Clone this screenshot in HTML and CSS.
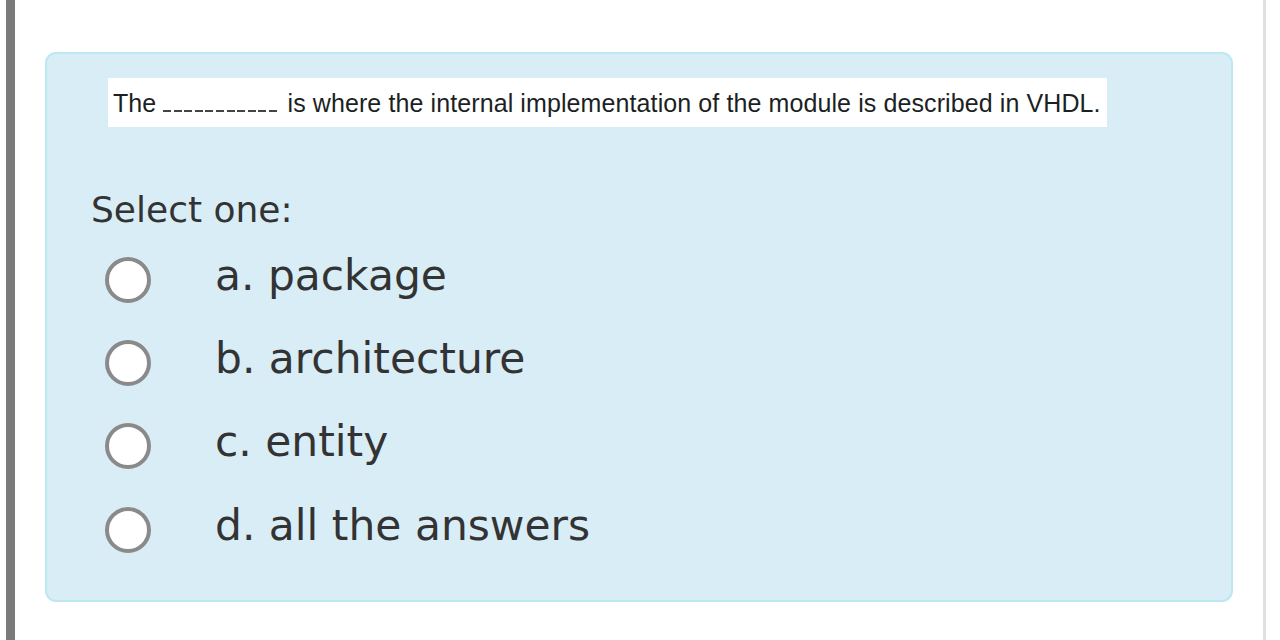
FILE: index.html
```html
<!DOCTYPE html>
<html lang="en">
<head>
<meta charset="utf-8">
<title>Question</title>
<link rel="stylesheet" href="styles.css">
</head>
<body>
<div class="page">
  <div class="left-bar"></div>
  <main class="content">
    <section class="card">
      <div class="question"><span class="qtext">The <span class="blank"></span> is where the internal implementation of the module is described in VHDL.</span></div>
      <div class="prompt">Select one:</div>
      <div class="answers">
        <label class="answer"><span class="radio"></span><span class="label">a. package</span></label>
        <label class="answer"><span class="radio"></span><span class="label">b. architecture</span></label>
        <label class="answer"><span class="radio"></span><span class="label">c. entity</span></label>
        <label class="answer"><span class="radio"></span><span class="label">d. all the answers</span></label>
      </div>
    </section>
  </main>
  <div class="right-line"></div>
</div>
</body>
</html>
```
FILE: styles.css
```css
html, body {
  margin: 0;
  padding: 0;
  background: #ffffff;
}
.page {
  display: flex;
  width: 1280px;
  height: 640px;
  overflow: hidden;
}
.left-bar {
  width: 9px;
  margin-left: 6px;
  background: #7a7a7a;
  flex: none;
}
.content {
  padding: 52px 30px 0 30px;
  flex: none;
}
.card {
  box-sizing: border-box;
  width: 1188px;
  height: 550px;
  background: #d9edf7;
  border: 2px solid #bce8f1;
  border-radius: 11px;
  padding: 24px 0 0 0;
}
.question {
  margin-left: 61px;
}
.qtext {
  display: inline-block;
  box-sizing: border-box;
  height: 49px;
  background: #ffffff;
  font-family: "Liberation Sans", Arial, sans-serif;
  font-size: 25px;
  line-height: 51px;
  letter-spacing: 0.1px;
  color: #1c1f23;
  padding: 0 6px 0 5px;
  white-space: nowrap;
  overflow: hidden;
}
.blank {
  display: inline-block;
  width: 117px;
  height: 2px;
  vertical-align: baseline;
  background: repeating-linear-gradient(90deg, #444 0 8px, transparent 8px 10.6px);
}
.prompt {
  margin: 58px 0 0 44px;
  font-family: "DejaVu Sans", Verdana, sans-serif;
  font-size: 36px;
  line-height: 42px;
  color: #333333;
}
.answers {
  margin-top: 7px;
  display: flex;
  flex-direction: column;
}
.answer {
  display: flex;
  align-items: center;
  height: 83.3px;
  padding-left: 58px;
}
.radio {
  box-sizing: border-box;
  width: 46px;
  height: 46px;
  border: 4px solid #8a8a8a;
  border-radius: 50%;
  background: #ffffff;
  flex: none;
}
.label {
  margin: 0 0 8px 64px;
  font-family: "DejaVu Sans", Verdana, sans-serif;
  font-size: 42.4px;
  line-height: 48px;
  color: #333333;
}
.right-line {
  width: 3px;
  background: #e0e0e0;
  flex: none;
}
```
